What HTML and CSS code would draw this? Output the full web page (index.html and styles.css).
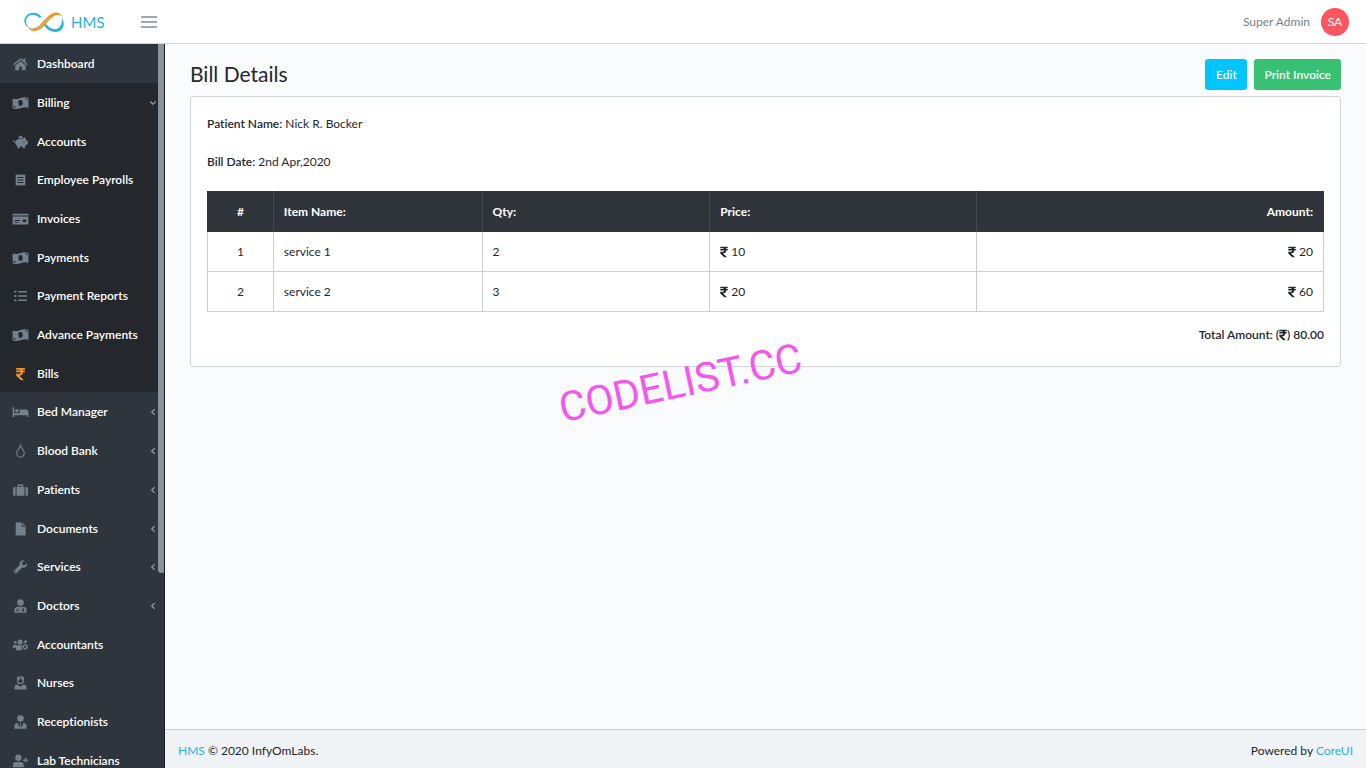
FILE: index.html
```html
<!DOCTYPE html>
<html lang="en">
<head>
<meta charset="utf-8">
<title>Bill Details | HMS</title>
<link rel="stylesheet" href="styles.css">
</head>
<body>
<svg class="sprite" aria-hidden="true">
  <symbol id="home" viewBox="0 0 18 16"><path d="M9 1 0.6 8.2l1 1.2L9 3.2l7.4 6.2 1-1.2-2.9-2.5V1.8h-2.2v2z"/><path d="M9 4.6 3 9.6V15h4.4v-4h3.2v4H15V9.600z"/></symbol>
  <symbol id="money" viewBox="0 0 18 16"><path fill-rule="evenodd" d="M0 2.800C3.500 4.400 6.500 3 9 2.200S14.500.7 18 2.200V13.600c-3-1.400-6-.4-9 .5s-5.700 1.400-9-.2V2.800zM9 4.700c-1.500 0-2.500 1.500-2.500 3.400s1 3.400 2.500 3.400 2.500-1.500 2.500-3.400S10.500 4.700 9 4.700zM1.200 11.200v1.900c1 .4 1.600.4 2.300.3 0-1.100-1-1.900-2.300-2.200zM14.700 2.600c0 1.100.9 1.900 2 2V2.900z"/></symbol>
  <symbol id="pig" viewBox="0 0 18 16"><path d="M6.600 2.800a2.700 2.700 0 0 1 5.200-.1 3 3 0 0 1-.2 1.200H8a5 5 0 0 0-1.200.1z"/><path fill-rule="evenodd" d="M14.600 2.500v2.200c.8.600 1.300 1.300 1.600 2.100h1.200v4.100h-1.600c-.4.700-.9 1.200-1.500 1.600V15h-2.800v-1.800H8.100V15H5.300v-2.300C3.900 11.700 3 10.200 3 8.700 1.400 8.600.4 7.300.5 5.700h1c0 1 .5 1.700 1.700 1.900C3.800 5.800 5.500 4.500 8 4.500h3.700c.8-1.300 1.800-1.900 2.900-2zM13 7a.7.7 0 1 0 0 1.400A.7.7 0 0 0 13 7z"/></symbol>
  <symbol id="receipt" viewBox="0 0 18 16"><path fill-rule="evenodd" d="M3.500 1.300l1.400.9 1.400-.9 1.400.9L9 1.300l1.400.9 1.400-.9 1.400.9 1.300-.9v13.400l-1.300-.9-1.400.9-1.400-.9-1.400.9-1.300-.9-1.400.9-1.400-.9-1.400.9zM5.500 4.600v1h7v-1zm0 2.900v1h7v-1zm0 2.900v1h7v-1z"/></symbol>
  <symbol id="check" viewBox="0 0 18 16"><path d="M0 2h18v2H0z"/><path fill-rule="evenodd" d="M0 5h18v9.300H0zM2.500 9v1.200h6V9zm0 2.300v1h4v-1zm9-2.700v2.800h4V8.600z"/></symbol>
  <symbol id="list" viewBox="0 0 18 16"><path d="M2 2h2.400v2.400H2zM2 6.800h2.400v2.400H2zM2 11.600h2.400V14H2zM6.300 2.300h10.200V4H6.300zm0 4.800h10.200v1.700H6.300zm0 4.800h10.200v1.700H6.300z"/></symbol>
  <symbol id="rupee" viewBox="0 0 320 512"><path d="M308 96c6.627 0 12-5.373 12-12V44c0-6.627-5.373-12-12-12H12C5.373 32 0 37.373 0 44v44.748c0 6.627 5.373 12 12 12h85.280c27.308 0 48.261 9.958 60.970 27.252H12c-6.627 0-12 5.373-12 12v40c0 6.627 5.373 12 12 12h158.757c-6.217 36.086-32.961 58.632-74.757 58.632H12c-6.627 0-12 5.373-12 12v53.012c0 3.349 1.400 6.546 3.861 8.818l165.052 152.356a12.001 12.001 0 0 0 8.139 3.182h82.562c10.924 0 16.166-13.408 8.139-20.818L116.871 319.906c76.499-2.340 131.144-53.395 138.318-127.906H308c6.627 0 12-5.373 12-12v-40c0-6.627-5.373-12-12-12h-58.690c-3.486-11.541-8.280-22.246-14.252-32H308z"/></symbol>
  <symbol id="bed" viewBox="0 0 18 16"><path d="M0 2.500h1.700v7H8V5h7a3 3 0 0 1 3 3v5.800h-1.700v-2.200H1.700v2.200H0z"/><circle cx="4.700" cy="6.600" r="2.100"/></symbol>
  <symbol id="drop" viewBox="0 0 18 16"><path fill="none" stroke="currentColor" stroke-width="1.300" d="M9 1.500C8 5 4.700 7.200 4.700 10.500a4.300 4.300 0 0 0 8.600 0C13.300 7.200 10 5 9 1.500z"/></symbol>
  <symbol id="suitcase" viewBox="0 0 18 16"><path d="M2 4.500h1.300v10H2A1.500 1.500 0 0 1 .5 13V6A1.500 1.500 0 0 1 2 4.500zM14.700 4.500H16A1.500 1.500 0 0 1 17.500 6v7a1.500 1.500 0 0 1-1.500 1.500h-1.300z"/><path fill-rule="evenodd" d="M4.500 4.500h1.300V2.300L6.600 1.500h4.800l.8.800v2.200h1.300v10h-9zm3-1.500v1.500h3V3z"/></symbol>
  <symbol id="file" viewBox="0 0 18 16"><path d="M3.500.5h6.800v4.800h4.600v10.200H3.500z"/><path d="M11.200.5l3.700 3.900h-3.700z"/></symbol>
  <symbol id="wrench" viewBox="0 0 18 16"><path fill-rule="evenodd" d="M16.400 3.700a4.300 4.300 0 0 1-5.600 5L5 14.600a2 2 0 0 1-2.900-2.900L8 5.900A4.300 4.300 0 0 1 13.200.5l-2.500 2.600.4 2.600 2.600.4zM3.500 12.300a.8.800 0 1 0 0 1.600.8.800 0 0 0 0-1.600z"/></symbol>
  <symbol id="doctor" viewBox="0 0 18 16"><circle cx="9" cy="4" r="3.700"/><path fill-rule="evenodd" d="M5.600 8.800h6.800a3.800 3.800 0 0 1 3.500 3.600v3.300H2.100v-3.300a3.800 3.800 0 0 1 3.500-3.600zm-.3 1.200v2.500H4.100v1.700h1v-1h1.600v1h1v-1.700H6.300V10zm6.200 0v1.700a1.400 1.400 0 1 0 1 0V10z"/></symbol>
  <symbol id="userscog" viewBox="0 0 18 16"><circle cx="3" cy="5" r="1.700"/><circle cx="8.600" cy="4.500" r="2.900"/><circle cx="14.800" cy="4.300" r="1.600"/><path d="M0 10a2 2 0 0 1 2-2h2l.9.500L3.300 11H0zM3.700 14v-2A3.400 3.400 0 0 1 7 8.200h3.300v4.300l1 1.500z"/><path fill-rule="evenodd" d="M13.400 6.700h1.600l.3 1.300 1.300-.4.900 1.400-.8 1 .8 1-.9 1.500-1.300-.4-.3 1.400h-1.600l-.4-1.400-1.300.4-.8-1.500.9-1-.9-1 .8-1.400L13 8zm.8 2a1.300 1.300 0 1 0 0 2.600 1.300 1.300 0 0 0 0-2.600z"/></symbol>
  <symbol id="nurse" viewBox="0 0 18 16"><path fill-rule="evenodd" d="M5 1.500L9 0l4 1.500v4a4 4 0 0 1-8 0zM6.500 4v1.500a2.500 2.500 0 0 0 5 0V4zM8.600 1.200v.7h-.7v.8h.7v.6h.8v-.6h.7v-.8h-.7v-.7z"/><path d="M5.500 9.800L9 12.200l3.500-2.400a3.600 3.600 0 0 1 3.400 3.500v2.200H2.100v-2.200a3.600 3.600 0 0 1 3.400-3.500z"/></symbol>
  <symbol id="tie" viewBox="0 0 18 16"><circle cx="9" cy="4" r="3.700"/><path d="M5.600 9L8 14.500 8.700 11 8 9h2l-.7 2 .7 3.500L12.400 9a3.600 3.600 0 0 1 3.500 3.600v3H2.100v-3A3.600 3.600 0 0 1 5.600 9z"/></symbol>
  <symbol id="userplus" viewBox="0 0 18 16"><circle cx="6.500" cy="4.300" r="3.600"/><path d="M.3 15v-2.200A3.700 3.700 0 0 1 4 9h5a3.700 3.700 0 0 1 3.700 3.800V15zM14 4.300h1.500v2.100h2.200v1.500h-2.200V10H14V7.900h-2.100V6.400H14z"/></symbol>
  <symbol id="chev" viewBox="0 0 8 8"><path fill="none" stroke="currentColor" stroke-width="1.400" d="M5.600 1.300L2.800 4l2.800 2.700"/></symbol>
</svg>

<header class="topbar">
  <a class="brand" href="#">
    <svg class="logo" viewBox="0 0 42 22" aria-hidden="true">
      <path fill="#25b5dc" d="M7 17.800C.5 14.500 0 8.500 3.500 4.600 7.500.4 14.500 1 18.500 5.600l-1.600 1.600C13.500 3.600 8.500 2.400 5 5.600c-3 3-2.600 8.300 2 12.200z"/>
      <path fill="#25b5dc" d="M22.600 12.600c4 4.800 8.500 6.900 12.300 4.900 3.400-1.900 4.800-6.500 3.500-11 3.800 5 2.800 11.200-1.900 13.500-5 2.300-11.300.3-15.600-5.700z"/>
      <path fill="#f0962a" d="M4.500 15.800c4 3.400 9 1.800 13.800-3.400 4.500-5 8-9.600 13.200-10.700 3.600-.7 6.500.8 8.300 4.300-3-2.400-6.200-2.500-9.300-.6-3.800 2.300-6.500 6.500-10.300 10.300-5.500 5.400-11.800 6.300-15.700.1z"/>
      <path fill="none" stroke="#9ccf9b" stroke-width="1" d="M14 18.200c5-2 8.500-8.700 13-11.800"/>
    </svg>
    <span>HMS</span>
  </a>
  <button class="toggler" type="button" aria-label="Toggle sidebar">
    <svg viewBox="0 0 16 12" aria-hidden="true"><path stroke="currentColor" stroke-width="1.300" d="M0 1h16M0 6h16M0 11h16"/></svg>
  </button>
  <a class="user" href="#"><span>Super Admin</span><span class="avatar">SA</span></a>
</header>

<div class="shell">
  <aside class="sidebar">
    <nav>
      <ul class="menu">
        <li><a href="#"><svg class="icon"><use href="#home"/></svg>Dashboard</a></li>
        <li class="open"><a href="#"><svg class="icon"><use href="#money"/></svg>Billing<svg class="chev down"><use href="#chev"/></svg></a></li>
        <li class="open"><a href="#"><svg class="icon"><use href="#pig"/></svg>Accounts</a></li>
        <li class="open"><a href="#"><svg class="icon"><use href="#receipt"/></svg>Employee Payrolls</a></li>
        <li class="open"><a href="#"><svg class="icon"><use href="#check"/></svg>Invoices</a></li>
        <li class="open"><a href="#"><svg class="icon"><use href="#money"/></svg>Payments</a></li>
        <li class="open"><a href="#"><svg class="icon"><use href="#list"/></svg>Payment Reports</a></li>
        <li class="open"><a href="#"><svg class="icon"><use href="#money"/></svg>Advance Payments</a></li>
        <li class="open active"><a href="#"><svg class="icon"><use href="#rupee"/></svg>Bills</a></li>
        <li><a href="#"><svg class="icon"><use href="#bed"/></svg>Bed Manager<svg class="chev"><use href="#chev"/></svg></a></li>
        <li><a href="#"><svg class="icon"><use href="#drop"/></svg>Blood Bank<svg class="chev"><use href="#chev"/></svg></a></li>
        <li><a href="#"><svg class="icon"><use href="#suitcase"/></svg>Patients<svg class="chev"><use href="#chev"/></svg></a></li>
        <li><a href="#"><svg class="icon"><use href="#file"/></svg>Documents<svg class="chev"><use href="#chev"/></svg></a></li>
        <li><a href="#"><svg class="icon"><use href="#wrench"/></svg>Services<svg class="chev"><use href="#chev"/></svg></a></li>
        <li><a href="#"><svg class="icon"><use href="#doctor"/></svg>Doctors<svg class="chev"><use href="#chev"/></svg></a></li>
        <li><a href="#"><svg class="icon"><use href="#userscog"/></svg>Accountants</a></li>
        <li><a href="#"><svg class="icon"><use href="#nurse"/></svg>Nurses</a></li>
        <li><a href="#"><svg class="icon"><use href="#tie"/></svg>Receptionists</a></li>
        <li><a href="#"><svg class="icon"><use href="#userplus"/></svg>Lab Technicians</a></li>
      </ul>
    </nav>
    <div class="thumb"></div>
  </aside>

  <div class="content">
    <main>
      <div class="heading">
        <h1>Bill Details</h1>
        <button class="btn edit" type="button">Edit</button>
        <button class="btn print" type="button">Print Invoice</button>
      </div>
      <section class="card">
        <p><b>Patient Name:</b> Nick R. Bocker</p>
        <p><b>Bill Date:</b> 2nd Apr,2020</p>
        <table>
          <colgroup><col class="c-num"><col class="c-item"><col class="c-qty"><col class="c-price"><col></colgroup>
          <thead>
            <tr><th class="center">#</th><th>Item Name:</th><th>Qty:</th><th>Price:</th><th class="right">Amount:</th></tr>
          </thead>
          <tbody>
            <tr><td class="center">1</td><td>service 1</td><td>2</td><td><svg class="cur"><use href="#rupee"/></svg> 10</td><td class="right"><svg class="cur"><use href="#rupee"/></svg> 20</td></tr>
            <tr><td class="center">2</td><td>service 2</td><td>3</td><td><svg class="cur"><use href="#rupee"/></svg> 20</td><td class="right"><svg class="cur"><use href="#rupee"/></svg> 60</td></tr>
          </tbody>
        </table>
        <p class="total"><b>Total Amount: (<svg class="cur"><use href="#rupee"/></svg>) 80.00</b></p>
        <div class="watermark">CODELIST.CC</div>
      </section>
    </main>
    <footer>
      <span><a href="#">HMS</a> © 2020 InfyOmLabs.</span>
      <span>Powered by <a href="#">CoreUI</a></span>
    </footer>
  </div>
</div>
</body>
</html>
```
FILE: styles.css
```css
* { box-sizing: border-box; }

body {
  margin: 0;
  height: 100vh;
  display: flex;
  flex-direction: column;
  overflow: hidden;
  background: #f9fbfd;
  color: #23282c;
  font: 12px/18px Lato, "Open Sans", sans-serif;
  font-variant-ligatures: none;
}

a { color: #29b2dd; text-decoration: none; }
b { font-weight: 600; }
.sprite { position: absolute; width: 0; height: 0; }
svg { fill: currentColor; }

.topbar {
  flex: none;
  display: flex;
  align-items: center;
  height: 44px;
  padding: 0 17px 0 23px;
  background: #fff;
  border-bottom: 1px solid #d3d8dc;
}
.brand {
  display: flex;
  align-items: center;
  gap: 6px;
  width: 117px;
  font-size: 15px;
}
.logo { width: 42px; height: 22px; }
.toggler {
  width: 18px;
  height: 20px;
  padding: 0 1px;
  border: 0;
  background: none;
  color: #818a94;
}
.toggler svg { display: block; width: 16px; height: 12px; }
.user {
  display: flex;
  align-items: center;
  gap: 11px;
  margin-left: auto;
  color: #73818f;
}
.avatar {
  width: 28px;
  height: 28px;
  border-radius: 50%;
  background: #fa5661;
  color: #fff;
  line-height: 28px;
  text-align: center;
}

.shell { flex: 1; display: flex; min-height: 0; }

.sidebar {
  position: relative;
  flex: none;
  width: 165px;
  overflow: hidden;
  background: #2f353c;
  border-right: 1px solid #1c2024;
}
.sidebar nav { height: 100%; }
.menu {
  display: grid;
  grid-auto-rows: 1fr;
  min-height: calc(100% + 11px);
  margin: 0;
  padding: 0;
  list-style: none;
}
.menu a {
  display: flex;
  align-items: center;
  gap: 8px;
  height: 100%;
  padding: 2px 7px 0 12px;
  color: #fff;
  font-weight: 600;
}
.menu .open { background: #24282d; }
.icon { width: 17px; height: 14px; color: #73818f; }
.active .icon { color: #f0932b; }
.chev { width: 8px; height: 8px; margin-left: auto; color: #8b949d; }
.down { transform: rotate(-90deg); }
.thumb {
  position: absolute;
  top: 0;
  right: -1px;
  width: 7px;
  height: 73%;
  border-radius: 0 0 4px 4px;
  background: #8a929b;
}

.content { flex: 1; display: flex; flex-direction: column; min-width: 0; }
main { flex: 1; padding: 15px 25px; }
.heading { display: flex; align-items: center; gap: 7px; margin-bottom: 6px; }
h1 { flex: 1; margin: 0; font-size: 21px; line-height: 30px; font-weight: 400; align-self: flex-start; }
.btn {
  min-width: 42px;
  height: 31px;
  padding: 0 10px;
  border: 0;
  border-radius: 3px;
  color: #fff;
  font: 600 12px/18px Lato, "Open Sans", sans-serif;
}
.edit { background: #00c5ff; }
.print { background: #38c172; }

.card {
  position: relative;
  padding: 18px 16px 22px;
  border: 1px solid #d0d5d9;
  border-radius: 3px;
  background: #fff;
}
.card p { margin: 0 0 20px; }
table {
  width: 100%;
  margin-bottom: 14px;
  table-layout: fixed;
  border-collapse: collapse;
  line-height: 19px;
}
.c-num { width: 5.9%; }
.c-item { width: 18.7%; }
.c-qty { width: 20.4%; }
.c-price { width: 23.9%; }
th, td { padding: 10px; border: 1px solid #c8ced3; text-align: left; }
thead th {
  background: #2f353a;
  color: #fff;
  font-weight: 700;
  border-color: #2f353a #454b51;
}
thead th:first-child { border-left-color: #2f353a; }
thead th:last-child { border-right-color: #2f353a; }
th.center, td.center { text-align: center; }
th.right, td.right { text-align: right; }
.cur { width: 8px; height: 12px; vertical-align: -2px; }
.card .total { margin: 0; text-align: right; }

.watermark {
  position: absolute;
  top: 261px;
  left: 366px;
  font: 41px/50px Roboto, "Liberation Sans", sans-serif;
  color: #f556ee;
  transform: rotate(-12deg);
}

footer {
  display: flex;
  align-items: center;
  justify-content: space-between;
  height: 39px;
  padding: 3px 13px 0;
  background: #f0f3f5;
  border-top: 1px solid #c8ced3;
}
```
